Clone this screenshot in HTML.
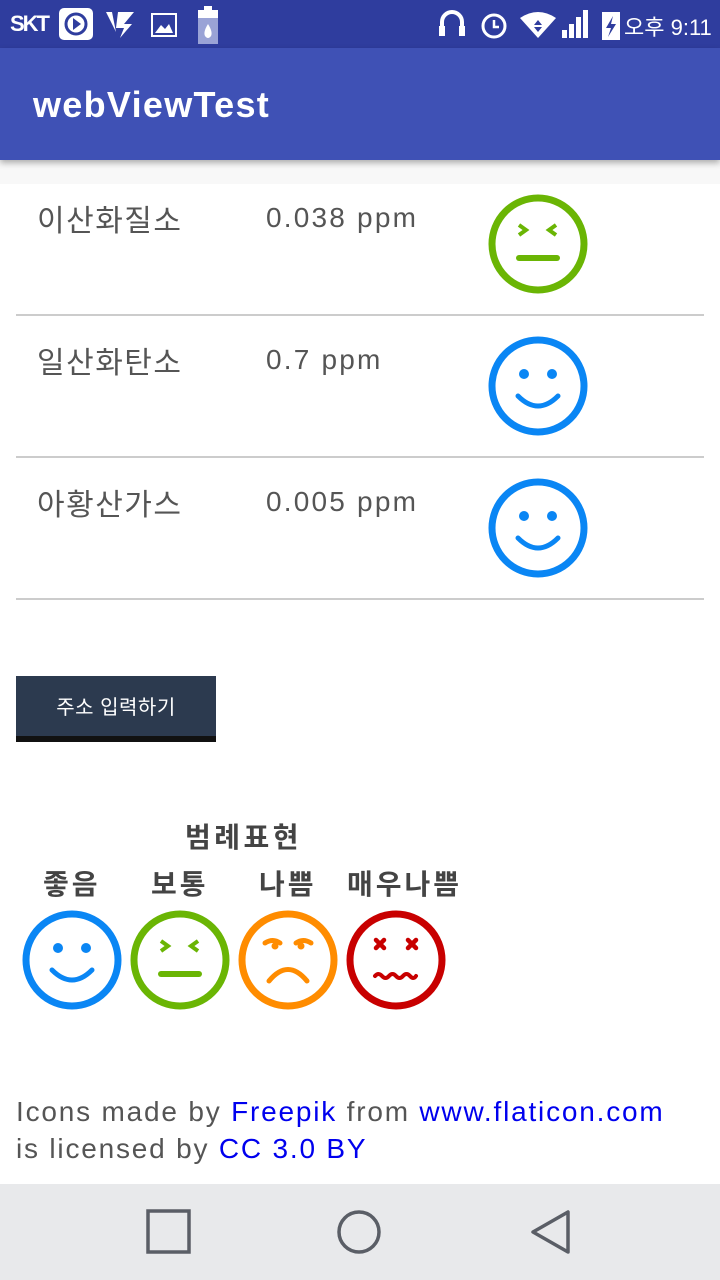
<!DOCTYPE html>
<html><head><meta charset="utf-8"><style>
*{margin:0;padding:0;box-sizing:border-box}
body{width:720px;height:1280px;position:relative;background:#fff;font-family:"Liberation Sans","Noto Sans CJK KR",sans-serif;overflow:hidden;color:#555}
.abs{position:absolute}
.sb{left:0;top:0;width:720px;height:48px;background:#2f3d9e;color:#fff}
.ab{left:0;top:48px;width:720px;height:112px;background:#3f51b5;box-shadow:0 3px 6px rgba(0,0,0,.3);z-index:2}
.ab span{position:absolute;left:33px;top:36px;font-size:36px;color:#fff;font-weight:bold;font-family:"Liberation Sans",sans-serif;letter-spacing:1.3px}
.gap{left:0;top:160px;width:720px;height:24px;background:#f8f8f8}
.lbl{font-size:30px;color:#555;letter-spacing:1.5px}
.val{font-size:28px;color:#555;letter-spacing:2.2px}
.line{left:16px;width:688px;height:2px;background:#ccc}
.btn{left:16px;top:676px;width:200px;height:66px;background:#2c3a4f;border-bottom:6px solid #111;color:#fff;font-size:20px;text-align:center;line-height:64px;letter-spacing:0.5px}
.lg{font-size:28px;font-weight:bold;color:#444;letter-spacing:3px}
.nav{left:0;top:1184px;width:720px;height:96px;background:#e8e9eb}
a{color:#0000ee;text-decoration:none}
</style></head><body>
<svg width="0" height="0" style="position:absolute"><defs>
<g id="good"><circle cx="50" cy="50" r="46" fill="none" stroke="#0a86f4" stroke-width="7"/><circle cx="36" cy="38" r="5" fill="#0a86f4"/><circle cx="64" cy="38" r="5" fill="#0a86f4"/><path d="M30 60 Q50 80 70 60" fill="none" stroke="#0a86f4" stroke-width="5" stroke-linecap="round"/></g>
<g id="norm"><circle cx="50" cy="50" r="46" fill="none" stroke="#6ab504" stroke-width="7"/><path d="M31 31 L38 36 L31 41 M68 31 L61 36 L68 41" fill="none" stroke="#6ab504" stroke-width="4"/><path d="M31 64 H69" stroke="#6ab504" stroke-width="6" stroke-linecap="round"/></g>
<g id="bad"><circle cx="50" cy="50" r="46" fill="none" stroke="#ff8c00" stroke-width="7"/><path d="M27 33 Q35 28 42 33 M58 33 Q65 28 73 33" fill="none" stroke="#ff8c00" stroke-width="5" stroke-linecap="round"/><circle cx="37" cy="36" r="3.5" fill="#ff8c00"/><circle cx="63" cy="36" r="3.5" fill="#ff8c00"/><path d="M31 71 Q50 48 69 71" fill="none" stroke="#ff8c00" stroke-width="5" stroke-linecap="round"/></g>
<g id="vbad"><circle cx="50" cy="50" r="46" fill="none" stroke="#c80000" stroke-width="7"/><path d="M30 30 L38 38 M38 30 L30 38 M62 30 L70 38 M70 30 L62 38" stroke="#c80000" stroke-width="4.5" stroke-linecap="round"/><path d="M29 66 q3.5 -4 7 0 t7 0 t7 0 t7 0 t7 0 t6 0" fill="none" stroke="#c80000" stroke-width="4" stroke-linecap="round"/></g>
</defs></svg>
<div class="abs sb">
<span class="abs" style="left:10px;top:11px;font-size:22px;font-weight:bold;letter-spacing:-2px">SKT</span>
<div class="abs" style="left:59px;top:8px;width:34px;height:32px;background:#fff;border-radius:5px"></div>
<svg class="abs" style="left:59px;top:8px" width="34" height="32"><circle cx="17" cy="16" r="10" fill="none" stroke="#2f3d9e" stroke-width="3"/><path d="M14 10 L22 16 L14 22Z" fill="#2f3d9e"/></svg>
<svg class="abs" style="left:104px;top:10px" width="34" height="30"><path d="M2 2 H8 L12 22 M14 2 H30 L20 14 H28 L16 28 L20 18 H12" fill="#fff"/></svg>
<svg class="abs" style="left:150px;top:12px" width="28" height="26"><rect x="2" y="2" width="24" height="22" fill="none" stroke="#fff" stroke-width="2"/><path d="M5 21 L11 13 L15 17 L19 12 L23 21Z" fill="#fff"/></svg>
<svg class="abs" style="left:196px;top:6px" width="24" height="38"><rect x="8" y="0" width="8" height="4" fill="#fff"/><rect x="2" y="4" width="20" height="34" fill="#9aa3d6"/><rect x="2" y="4" width="20" height="8" fill="#fff"/><path d="M12 18 Q7 26 9 30 Q12 34 15 30 Q17 26 12 18Z" fill="#fff"/></svg>
<svg class="abs" style="left:436px;top:8px" width="200" height="34"><path d="M6 24 V14 A10 10 0 0 1 26 14 V24" fill="none" stroke="#fff" stroke-width="4"/><rect x="3" y="18" width="6" height="10" fill="#fff"/><rect x="23" y="18" width="6" height="10" fill="#fff"/><circle cx="58" cy="18" r="11" fill="none" stroke="#fff" stroke-width="3"/><path d="M58 12 V19 H63" fill="none" stroke="#fff" stroke-width="2.5"/><path d="M84 10 Q102 -2 120 10 L102 30Z" fill="#fff"/><path d="M102 12 L98 17 H106Z M102 24 L98 19 H106Z" fill="#2f3d9e"/><rect x="126" y="22" width="5" height="8" fill="#fff"/><rect x="133" y="16" width="5" height="14" fill="#fff"/><rect x="140" y="9" width="5" height="21" fill="#fff"/><rect x="147" y="2" width="5" height="28" fill="#fff"/><rect x="166" y="4" width="18" height="28" fill="#fff"/><path d="M177 8 L170 20 H175 L172 29 L180 16 H175Z" fill="#2f3d9e"/></svg>
<span class="abs" style="left:624px;top:10px;font-size:22px">오후 9:11</span>
</div>
<div class="abs ab"><span>webViewTest</span></div>
<div class="abs gap"></div>

<span class="abs lbl" style="left:37px;top:196px">이산화질소</span>
<span class="abs val" style="left:266px;top:202px">0.038 ppm</span>
<svg class="abs" style="left:488px;top:194px" width="100" height="100" viewBox="0 0 100 100"><use href="#norm"/></svg>
<div class="abs line" style="top:314px"></div>

<span class="abs lbl" style="left:37px;top:338px">일산화탄소</span>
<span class="abs val" style="left:266px;top:344px">0.7 ppm</span>
<svg class="abs" style="left:488px;top:336px" width="100" height="100" viewBox="0 0 100 100"><use href="#good"/></svg>
<div class="abs line" style="top:456px"></div>

<span class="abs lbl" style="left:37px;top:480px">아황산가스</span>
<span class="abs val" style="left:266px;top:486px">0.005 ppm</span>
<svg class="abs" style="left:488px;top:478px" width="100" height="100" viewBox="0 0 100 100"><use href="#good"/></svg>
<div class="abs line" style="top:598px"></div>

<div class="abs btn">주소 입력하기</div>

<span class="abs lg" style="left:185px;top:816px;letter-spacing:3.5px">범례표현</span>
<span class="abs lg" style="left:43px;top:863px">좋음</span>
<span class="abs lg" style="left:151px;top:863px">보통</span>
<span class="abs lg" style="left:259px;top:863px">나쁨</span>
<span class="abs lg" style="left:347px;top:863px">매우나쁨</span>
<svg class="abs" style="left:22px;top:910px" width="100" height="100" viewBox="0 0 100 100"><use href="#good"/></svg>
<svg class="abs" style="left:130px;top:910px" width="100" height="100" viewBox="0 0 100 100"><use href="#norm"/></svg>
<svg class="abs" style="left:238px;top:910px" width="100" height="100" viewBox="0 0 100 100"><use href="#bad"/></svg>
<svg class="abs" style="left:346px;top:910px" width="100" height="100" viewBox="0 0 100 100"><use href="#vbad"/></svg>

<div class="abs" style="left:16px;top:1093px;font-size:28px;line-height:37px;color:#555;letter-spacing:1.8px;white-space:nowrap">Icons made by <a>Freepik</a> from <a>www.flaticon.com</a><br>is licensed by <a>CC 3.0 BY</a></div>

<div class="abs nav">
<svg class="abs" style="left:0;top:0" width="720" height="96"><rect x="148" y="27" width="41" height="41" fill="none" stroke="#5a5e66" stroke-width="3.5"/><circle cx="359" cy="48" r="20" fill="none" stroke="#5a5e66" stroke-width="3.5"/><path d="M568 28 V68 L533 48Z" fill="none" stroke="#5a5e66" stroke-width="3.5" stroke-linejoin="round"/></svg>
</div>
</body></html>
